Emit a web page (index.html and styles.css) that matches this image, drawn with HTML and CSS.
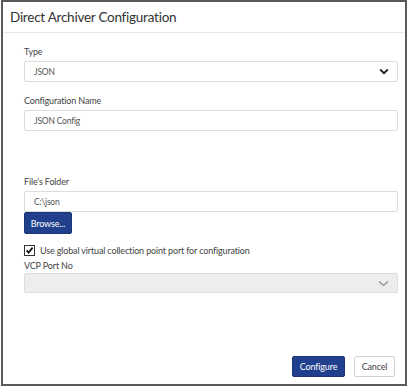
FILE: index.html
```html
<!DOCTYPE html>
<html lang="en">
<head>
    <meta charset="UTF-8">
    <meta name="viewport" content="width=device-width, initial-scale=1.0">
    <title>Direct Archiver Configuration</title>
    <link rel="stylesheet" href="styles.css">
</head>
<body>
<div class="dialog">
    <div class="dialog-header">
        <h1>Direct Archiver Configuration</h1>
    </div>
    <div class="dialog-body">
        <div class="form-group">
            <label for="type">Type</label>
            <div class="select">
                <span>JSON</span>
                <svg class="chevron" width="10" height="7" viewBox="0 0 10 7"><path d="M1.2 1.5 L5 5.2 L8.8 1.5" fill="none" stroke="#222" stroke-width="1.8"/></svg>
            </div>
        </div>
        <div class="form-group">
            <label for="config-name">Configuration Name</label>
            <input type="text" id="config-name" value="JSON Config">
        </div>
        <div class="form-group folder">
            <label for="folder">File's Folder</label>
            <input type="text" id="folder" value="C:\json">
            <button class="btn btn-primary browse">Browse...</button>
        </div>
        <div class="check-row">
            <span class="checkbox">
                <svg width="9" height="9" viewBox="0 0 9 9"><path d="M1.6 4.4 L3.6 6.6 L7.6 1.6" fill="none" stroke="#111" stroke-width="1.7"/></svg>
            </span>
            <span>Use global virtual collection point port for configuration</span>
        </div>
        <div class="form-group vcp">
            <label for="vcp">VCP Port No</label>
            <div class="select disabled">
                <span></span>
                <svg class="chevron" width="11" height="7" viewBox="0 0 11 7"><path d="M1 1.5 L5.5 5.5 L10 1.5" fill="none" stroke="#8a8a8a" stroke-width="1.1"/></svg>
            </div>
        </div>
    </div>
    <div class="dialog-footer">
        <button class="btn btn-primary">Configure</button>
        <button class="btn btn-default">Cancel</button>
    </div>
</div>
</body>
</html>
```

FILE: styles.css
```css
html, body {
    height: 100%;
}
body {
    font-family: "Segoe UI", Lato, "Open Sans", sans-serif;
    margin: 0;
    padding: 0 2px 2px 1px;
    background-color: #fff;
    box-sizing: border-box;
}
.dialog {
    height: 100%;
    box-sizing: border-box;
    border: 2px solid #5b5b5b;
    display: flex;
    flex-direction: column;
    color: #444;
}
.dialog-header {
    height: 30px;
    padding-left: 7px;
    border-bottom: 1px solid #e8e8e8;
    display: flex;
    align-items: center;
}
.dialog-header h1 {
    margin: 0;
    font-size: 13.5px;
    letter-spacing: -0.25px;
    font-weight: normal;
    color: #333;
}
.dialog-body {
    padding: 0 7px 0 21px;
}
.form-group {
    margin-top: 12px;
}
.form-group.folder {
    margin-top: 44px;
}
.form-group.vcp {
    margin-top: 2px;
}
label {
    display: block;
    font-size: 9px;
    letter-spacing: -0.15px;
    line-height: 14px;
    margin-bottom: 2px;
}
.vcp label {
    margin-bottom: 0;
}
input, .select {
    display: flex;
    align-items: center;
    width: 100%;
    height: 21px;
    box-sizing: border-box;
    padding: 0 9px;
    border: 1px solid #dcdcdc;
    border-radius: 2px;
    font-family: inherit;
    font-size: 8.5px;
    letter-spacing: -0.2px;
    color: #555;
    background: #fff;
}
.select {
    justify-content: space-between;
}
.select.disabled {
    background: #ededed;
    height: 20px;
}
.chevron {
    margin-right: -1px;
}
.btn {
    height: 21px;
    padding: 0 8px;
    border-radius: 2px;
    font-family: inherit;
    font-size: 9px;
    letter-spacing: -0.15px;
    cursor: pointer;
}
.btn-primary {
    background-color: #203f8c;
    border: 1px solid #1a3475;
    color: #fff;
}
.btn-default {
    background-color: #fff;
    border: 1px solid #d0d0d0;
    color: #444;
}
.browse {
    display: block;
    height: 22px;
    width: 48px;
    padding: 0;
}
.check-row {
    display: flex;
    align-items: center;
    gap: 5px;
    margin-top: 9px;
    height: 14px;
    font-size: 9px;
    letter-spacing: -0.15px;
}
.checkbox {
    width: 9px;
    height: 9px;
    border: 1px solid #333;
    display: flex;
    align-items: center;
    justify-content: center;
}
.dialog-footer {
    margin-top: auto;
    display: flex;
    justify-content: flex-end;
    gap: 9px;
    padding: 0 10px 7px 0;
}
.dialog-footer .btn-primary {
    width: 53px;
    padding: 0;
}
.dialog-footer .btn-default {
    width: 41px;
    padding: 0;
}
```
